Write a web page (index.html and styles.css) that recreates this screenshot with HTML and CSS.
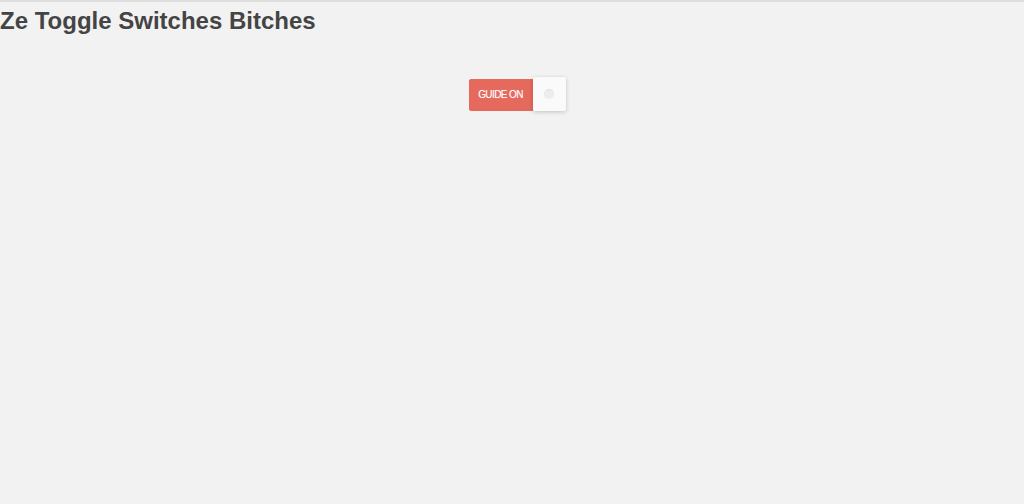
FILE: index.html
```html
<!DOCTYPE html>
<html>
<head>
<meta charset="utf-8">
<link rel="stylesheet" href="styles.css">
</head>
<body>
<h1 class="title">Ze Toggle Switches Bitches</h1>
<div class="stage">
  <div class="toggle">
    <div class="label">GUIDE ON</div>
    <div class="knob"><span class="dot"></span></div>
  </div>
</div>
</body>
</html>
```
FILE: styles.css
```css
html, body {
  margin: 0;
  padding: 0;
  background: #f2f2f2;
  height: 100%;
}
body {
  border-top: 2px solid #dedede;
  box-sizing: border-box;
  font-family: "Liberation Sans", Arial, sans-serif;
}
.title {
  margin: 0;
  padding-top: 7px;
  font-size: 24px;
  font-weight: bold;
  color: #444;
  line-height: 24px;
}
.stage {
  display: flex;
  justify-content: center;
  padding-top: 45px;
  padding-left: 10px;
}
.toggle {
  display: flex;
  align-items: center;
}
.label {
  width: 64px;
  height: 32px;
  background: #e5695d;
  color: #fff;
  font-size: 10px;
  letter-spacing: -0.6px;
  display: flex;
  align-items: center;
  justify-content: center;
  border-radius: 2px 0 0 2px;
  text-shadow: 0 0 1px rgba(255,255,255,0.4);
}
.knob {
  width: 33px;
  height: 34px;
  background: #fafafa;
  border-radius: 2px;
  box-shadow: 0 1px 4px rgba(0,0,0,0.2);
  display: flex;
  align-items: center;
  justify-content: center;
  margin-top: -1px;
}
.dot {
  width: 10px;
  height: 10px;
  border-radius: 50%;
  background: #ededed;
  box-shadow: inset 0 1px 1px rgba(0,0,0,0.06);
}
```
